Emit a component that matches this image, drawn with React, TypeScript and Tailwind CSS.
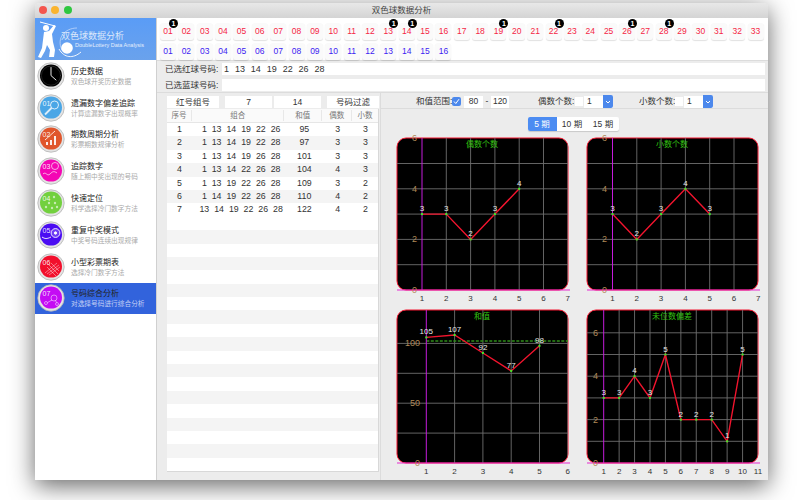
import React from "react";

const FONT = "font-['Liberation_Sans','Noto_Sans_CJK_SC',sans-serif]";
const pad = (n: number) => String(n).padStart(2, "0");
const picked = [1, 13, 14, 19, 22, 26, 28];

function Ball({ n, blue, badge }: { n: number; blue?: boolean; badge?: boolean }) {
  return (
    <div className={`relative flex h-[17px] w-[16px] items-center justify-center rounded-[3px] bg-[#fafafa] text-[8.5px] shadow-[0_1px_1px_rgba(0,0,0,0.12)] ${blue ? "text-[#3d22f2]" : "text-[#f52645]"}`}>
      {pad(n)}
      {badge && (
        <span className="absolute left-[9px] top-[-4px] flex h-[9px] w-[9px] items-center justify-center rounded-full bg-black text-[7px] font-bold leading-none text-white">1</span>
      )}
    </div>
  );
}

function AppIcon({ i, color }: { i: number; color: string }) {
  return (
    <svg width="28" height="28" viewBox="0 0 28 28" className="shrink-0">
      <circle cx="14" cy="14" r="13.2" fill="#e4e4e4" stroke="#b4b4b4" strokeWidth="0.8" />
      <circle cx="14" cy="13.6" r="11" fill={color} />
      {i === 0 ? (
        <g stroke="#fff" strokeLinecap="round" fill="none">
          <path d="M14 5.5V13.6L19 18" strokeWidth="0.9" />
          <circle cx="14" cy="13.6" r="9.6" stroke="#555" strokeWidth="0.4" />
        </g>
      ) : (
        <g>
          <text x="5.5" y="11.5" fontSize="7" fill="#fff" fillOpacity="0.9">{pad(i)}</text>
          {i === 1 && (
            <g fill="none" stroke="#fff" strokeOpacity="0.8" strokeWidth="1">
              <circle cx="17.5" cy="11" r="4" />
              <path d="M14.5 14L8 20.5" strokeWidth="1.8" />
            </g>
          )}
          {i === 2 && (
            <g fill="#fff" fillOpacity="0.9">
              <rect x="9" y="17" width="2" height="3" />
              <rect x="13" y="15" width="2" height="5" />
              <rect x="17" y="11" width="2" height="9" />
              <path d="M8 15L18 6" stroke="#fff" strokeWidth="0.8" />
            </g>
          )}
          {i === 3 && (
            <g fill="none" stroke="#fff" strokeOpacity="0.8" strokeWidth="0.8">
              <circle cx="18" cy="9" r="3.5" />
              <path d="M6 17c3-3 4 3 7 0s4-3 7-1" />
            </g>
          )}
          {i === 4 && (
            <g fill="#fff" fillOpacity="0.6">
              <circle cx="17" cy="8" r="1.2" /><circle cx="12" cy="14" r="1.2" /><circle cx="18" cy="14" r="1.2" />
              <circle cx="9" cy="18" r="1.2" /><circle cx="15" cy="19" r="1.2" /><circle cx="20" cy="18" r="1.2" />
            </g>
          )}
          {i === 5 && (
            <g fill="none" stroke="#fff" strokeWidth="0.9">
              <circle cx="18.5" cy="12" r="4.4" fill="#fff" fillOpacity="0.2" />
              <circle cx="18.5" cy="12" r="1.2" fill="#fff" />
              <path d="M5 16c3 2 5 2 9 0" />
            </g>
          )}
          {i === 6 && (
            <g stroke="#fff" strokeOpacity="0.7" strokeWidth="0.6" fill="none">
              <path d="M8 20L20 10M10 21L22 12M12 22L23 14M12 12l9 9M10 14l9 9M14 10l8 8" />
            </g>
          )}
          {i === 7 && (
            <g fill="none" stroke="#fff" strokeOpacity="0.7" strokeWidth="0.7">
              <circle cx="17" cy="14" r="3" />
              <circle cx="9" cy="19" r="1.5" />
              <circle cx="20" cy="20" r="1.5" />
              <path d="M10.5 18.5L15 16M18.5 16.5l1 2" />
            </g>
          )}
        </g>
      )}
    </svg>
  );
}

const menu = [
  ["历史数据", "双色球开奖历史数据", "#000000"],
  ["遗漏数字偏差追踪", "计算遗漏数字出现概率", "#4aa6e6"],
  ["期数周期分析", "彩票期数规律分析", "#e0562c"],
  ["追踪数字", "随上期中奖出现的号码", "#f407b4"],
  ["快速定位", "科学选择冷门数字方法", "#72d03e"],
  ["重复中奖模式", "中奖号码连续出现规律", "#4a0cf2"],
  ["小型彩票期表", "选择冷门数字方法", "#f20f2c"],
  ["号码综合分析", "对选择号码进行综合分析", "#c40cf4"],
];

function Banner() {
  return (
    <div className="relative h-[42px] overflow-hidden bg-gradient-to-b from-[#5a9cf6] to-[#6aa2ec]">
      <svg width="121" height="42" viewBox="0 0 121 42" className="absolute inset-0">
        <circle cx="11" cy="10" r="3" fill="#fff" />
        <path d="M9 14L14 13L19 7L21 8L17 16L18 24L20 32L19 39L14 39L15 32L12 27L10 33L6 40L3 39L7 30L8 22Z" fill="#fff" />
        <path d="M20 8L5 4" stroke="#fff" strokeWidth="1" />
        <path d="M27 32C21 20 30 10 42 10" stroke="#cfe0fa" strokeWidth="0.7" fill="none" />
        <path d="M24 31c5 9 14 10 22 3" stroke="#fff" strokeWidth="0.9" fill="none" />
        <circle cx="32" cy="30" r="5.8" fill="#fff" />
      </svg>
      <div className="absolute left-[26px] top-[12px] text-[9px] leading-[12px] text-[#dce8fb]">双色球数据分析</div>
      <div className="absolute left-[40px] top-[23px] whitespace-nowrap text-[5.5px] leading-[8px] text-[#e4eefc]">DoubleLottery Data Analysis</div>
    </div>
  );
}

function Sidebar() {
  return (
    <div className="flex w-[122px] shrink-0 flex-col border-r border-[#d0d0d0] bg-white">
      <Banner />
      {menu.map(([t, s, c], i) => (
        <div key={t} className={`flex h-[31.8px] items-center pl-[2px] ${i === 7 ? "bg-[#3263dc]" : ""}`}>
          <AppIcon i={i} color={c} />
          <div className="ml-[6px] min-w-0 pt-[1px]">
            <div className="whitespace-nowrap text-[8px] leading-[11px] text-[#222]">{t}</div>
            <div className={`whitespace-nowrap text-[6.7px] leading-[10px] ${i === 7 ? "text-[#c3d0f5]" : "text-[#aaa]"}`}>{s}</div>
          </div>
        </div>
      ))}
    </div>
  );
}

function Box({ className = "", children }: { className?: string; children?: React.ReactNode }) {
  return <div className={`flex items-center justify-center bg-white text-[8.5px] text-[#333] ${className}`}>{children}</div>;
}

type ChartProps = {
  title: string;
  data: number[];
  box: [number, number];
  axisX: number;
  step: number;
  xCount: number;
  y0: number;
  unit: number;
  grid: number[];
  yLabels: number[];
  labelX: number;
  goal?: number;
};

function Chart({ title, data, box, axisX, step, xCount, y0, unit, grid, yLabels, labelX, goal }: ChartProps) {
  const [top, bottom] = box;
  const Y = (v: number) => y0 - v * unit;
  const X = (i: number) => axisX + i * step;
  const pts = data.map((v, i) => `${X(i)},${Y(v)}`).join(" ");
  const clipId = "c" + title;
  return (
    <svg width="190" height="172" viewBox="0 0 190 172" className="block">
      <clipPath id={clipId}><rect x="7" y={top} width="171" height={bottom - top} rx="9" /></clipPath>
      <rect x="7" y={top} width="171" height={bottom - top} rx="9" fill="#000" stroke="#f3152f" strokeWidth="1" />
      <g clipPath={`url(#${clipId})`} stroke="#6e6e6e" strokeWidth="0.9">
        {grid.map((v) => <line key={v} x1="7" x2="178" y1={Y(v)} y2={Y(v)} />)}
        {Array.from({ length: xCount }, (_, i) => <line key={i} x1={X(i + 1)} x2={X(i + 1)} y1={top} y2={bottom} />)}
      </g>
      {goal !== undefined && <line x1={axisX} x2="178" y1={Y(goal)} y2={Y(goal)} stroke="#2f8f1a" strokeWidth="1.3" strokeDasharray="3 1.5" />}
      <line x1={axisX} x2={axisX} y1={top} y2={bottom} stroke="#c51cdc" strokeWidth="1" />
      <line x1="7" x2="180" y1={bottom} y2={bottom} stroke="#e52bd0" strokeWidth="1" />
      <polyline points={pts} fill="none" stroke="#f2142e" strokeWidth="1.4" />
      {data.map((v, i) => (
        <g key={i}>
          <rect x={X(i) - 1} y={Y(v) - 1} width="2" height="2" fill="#3cf02a" />
          <text x={X(i)} y={Y(v) - 3} textAnchor="middle" fontSize="8" fill="#e8e8e8">{v}</text>
        </g>
      ))}
      <text x="92" y={top + 9} textAnchor="middle" fontSize="8" fill="#33c412">{title}</text>
      {yLabels.map((v) => (
        <text key={v} x={labelX} y={Y(v) + 3} textAnchor="end" fontSize="9" fill="#b08a58">{v}</text>
      ))}
      {Array.from({ length: xCount + 1 }, (_, i) => (
        <text key={i} x={X(i)} y={bottom + 11} textAnchor="middle" fontSize="8" fill="#333">{i + 1}</text>
      ))}
    </svg>
  );
}

function Select() {
  return (
    <div className="ml-[1px] flex h-[12px] items-center bg-white pl-[3px] text-[8.5px] text-[#333]">
      <span className="w-[16px]">1</span>
      <span className="flex h-[13px] w-[10px] items-center justify-center rounded-r-[2px] bg-[#4c88ec]">
        <svg width="6" height="4" viewBox="0 0 6 4"><path d="M1 1l2 2 2-2" stroke="#fff" strokeWidth="1" fill="none" /></svg>
      </span>
    </div>
  );
}

const rows = [
  [1, "1 13 14 19 22 26", 95, 3, 3],
  [2, "1 13 14 19 22 28", 97, 3, 3],
  [3, "1 13 14 19 26 28", 101, 3, 3],
  [4, "1 13 14 22 26 28", 104, 4, 3],
  [5, "1 13 19 22 26 28", 109, 3, 2],
  [6, "1 14 19 22 26 28", 110, 4, 2],
  [7, "13 14 19 22 26 28", 122, 4, 2],
];

function Table() {
  const filler = Array.from({ length: 19 }, (_, i) => i);
  return (
    <div className="mt-[1px] h-[363px] overflow-hidden border-r border-b border-[#d8d8d8] bg-white text-[8.8px] text-[#333]">
      <div className="flex h-[14px] items-center border-b border-[#e6e6e6] bg-[#fafafa] text-center text-[7.5px] text-[#777]">
        <div className="w-[25px] border-r border-[#e8e8e8]">序号</div>
        <div className="w-[93px] border-r border-[#e8e8e8]">组合</div>
        <div className="w-[38px] border-r border-[#e8e8e8]">和值</div>
        <div className="w-[30px] border-r border-[#e8e8e8]">偶数</div>
        <div className="w-[26px]">小数</div>
      </div>
      {rows.map((r, i) => (
        <div key={i} className={`flex h-[13.4px] items-center text-center ${i % 2 ? "bg-[#f4f4f4]" : "bg-white"}`}>
          <div className="w-[25px]">{r[0]}</div>
          <div className="w-[93px] whitespace-pre pl-[6px] [word-spacing:2.5px]">{r[1]}</div>
          <div className="w-[38px] pl-[2px]">{r[2]}</div>
          <div className="w-[30px] pl-[1px]">{r[3]}</div>
          <div className="w-[26px] pl-[1px]">{r[4]}</div>
        </div>
      ))}
      {filler.map((i) => (
        <div key={i} className={`h-[13.4px] ${i % 2 === 0 ? "bg-white" : "bg-[#f4f4f4]"}`} />
      ))}
    </div>
  );
}

export default function App() {
  return (
    <div className={`h-[500px] w-[800px] overflow-hidden bg-white pl-[35px] pt-[3px] ${FONT}`}>
      <div className="flex h-[477px] w-[733px] flex-col overflow-hidden rounded-t-[4px] bg-[#ececec] shadow-[0_6px_24px_rgba(0,0,0,0.6)]">
        <div className="relative flex h-[15px] shrink-0 items-center justify-center bg-gradient-to-b from-[#e8e8e8] to-[#d4d4d4] text-[8.5px] text-[#444]">
          <div className="absolute left-[4px] top-[3px] flex gap-[4.3px]">
            <span className="h-[8px] w-[8px] rounded-full bg-[#f4564e]" />
            <span className="h-[8px] w-[8px] rounded-full bg-[#fab42e]" />
            <span className="h-[8px] w-[8px] rounded-full bg-[#2ec740]" />
          </div>
          双色球数据分析
        </div>
        <div className="flex min-h-0 flex-1">
          <Sidebar />
          <div className="flex min-w-0 flex-1 flex-col">
            <div className="flex h-[42px] shrink-0 flex-col gap-[2.6px] bg-white pl-[3px] pt-[5px]">
              <div className="flex gap-[2.37px]">
                {Array.from({ length: 33 }, (_, i) => i + 1).map((n) => <Ball key={n} n={n} badge={picked.includes(n)} />)}
              </div>
              <div className="flex gap-[2.37px]">
                {Array.from({ length: 16 }, (_, i) => i + 1).map((n) => <Ball key={n} n={n} blue />)}
              </div>
            </div>
            <div className="flex h-[33px] shrink-0 flex-col gap-[3px] border-b border-t border-[#dcdcdc] pl-[8px] pr-[3px] pt-[2px] text-[8.5px] text-[#333]">
              <div className="flex items-center">
                <span className="w-[57px]">已选红球号码:</span>
                <div className="flex h-[12px] flex-1 items-center bg-white pl-[2px] text-[9px] [word-spacing:3.4px]">1 13 14 19 22 26 28</div>
              </div>
              <div className="flex items-center">
                <span className="w-[57px]">已选蓝球号码:</span>
                <div className="h-[12px] flex-1 bg-white" />
              </div>
            </div>
            <div className="flex min-h-0 flex-1">
              <div className="w-[223px] shrink-0 pl-[10px] pr-[1px] pt-[3px]">
                <div className="flex h-[12px]">
                  <Box className="w-[52px]">红号组号</Box>
                  <Box className="ml-[6px] w-[47px]">7</Box>
                  <Box className="ml-[2px] w-[47px]">14</Box>
                  <Box className="ml-[6px] w-[52px]">号码过滤</Box>
                </div>
                <Table />
              </div>
              <div className="flex min-w-0 flex-1 flex-col border-l border-[#dcdcdc]">
                <div className="flex h-[16px] shrink-0 items-center border-b border-[#dcdcdc] pl-[35px] pt-[2px] text-[8.5px] text-[#333]">
                  <span className="w-[36px] whitespace-nowrap">和值范围:</span>
                  <span className="flex h-[9px] w-[9px] items-center justify-center rounded-[2px] bg-[#4c88ec]">
                    <svg width="7" height="7" viewBox="0 0 7 7"><path d="M1 3.5l1.8 2L6 1.2" stroke="#fff" strokeWidth="1" fill="none" /></svg>
                  </span>
                  <Box className="ml-[3px] h-[12px] w-[19px]">80</Box>
                  <span className="w-[8px] text-center">-</span>
                  <Box className="h-[12px] w-[18px]">120</Box>
                  <span className="ml-[29px] w-[37px] whitespace-nowrap">偶数个数:</span>
                  <span className="h-[9px] w-[8px] bg-white" />
                  <Select />
                  <span className="ml-[26px] w-[36px] whitespace-nowrap">小数个数:</span>
                  <span className="h-[9px] w-[8px] bg-white" />
                  <Select />
                </div>
                <div className="flex h-[22px] shrink-0 items-end justify-center pr-[3px]">
                  <div className="flex h-[14px] overflow-hidden rounded-[2px] bg-white text-[8.5px] text-[#333] shadow-[0_1px_1px_rgba(0,0,0,0.15)]">
                    <span className="flex w-[29px] items-center justify-center bg-[#4c8cf2] text-white">5 期</span>
                    <span className="flex w-[31px] items-center justify-center">10 期</span>
                    <span className="flex w-[31px] items-center justify-center">15 期</span>
                  </div>
                </div>
                <div className="ml-[9px] grid grid-cols-[190px_190px] grid-rows-[173px_172px]">
                  <Chart title="偶数个数" data={[3, 3, 2, 3, 4]} box={[7, 159]} axisX={32} step={24.3} xCount={6} y0={159} unit={25.3} grid={[1, 2, 3, 4, 5]} yLabels={[6, 4, 2, 0]} labelX={27} />
                  <Chart title="小数个数" data={[3, 2, 3, 4, 3]} box={[7, 159]} axisX={32.5} step={24.3} xCount={6} y0={159} unit={25.3} grid={[1, 2, 3, 4, 5]} yLabels={[6, 4, 2, 0]} labelX={27} />
                  <Chart title="和值" data={[105, 107, 92, 77, 98]} box={[6, 159]} axisX={36.3} step={28.3} xCount={5} y0={159} unit={1.196} grid={[25, 50, 75, 100]} yLabels={[100, 50, 0]} labelX={30} goal={102} />
                  <Chart title="未位数偏差" data={[3, 3, 4, 3, 5, 2, 2, 2, 1, 5]} box={[6, 159]} axisX={23.7} step={15.43} xCount={10} y0={159} unit={21.7} grid={[1, 2, 3, 4, 5, 6]} yLabels={[6, 4, 2, 0]} labelX={18} />
                </div>
              </div>
            </div>
          </div>
        </div>
      </div>
    </div>
  );
}
